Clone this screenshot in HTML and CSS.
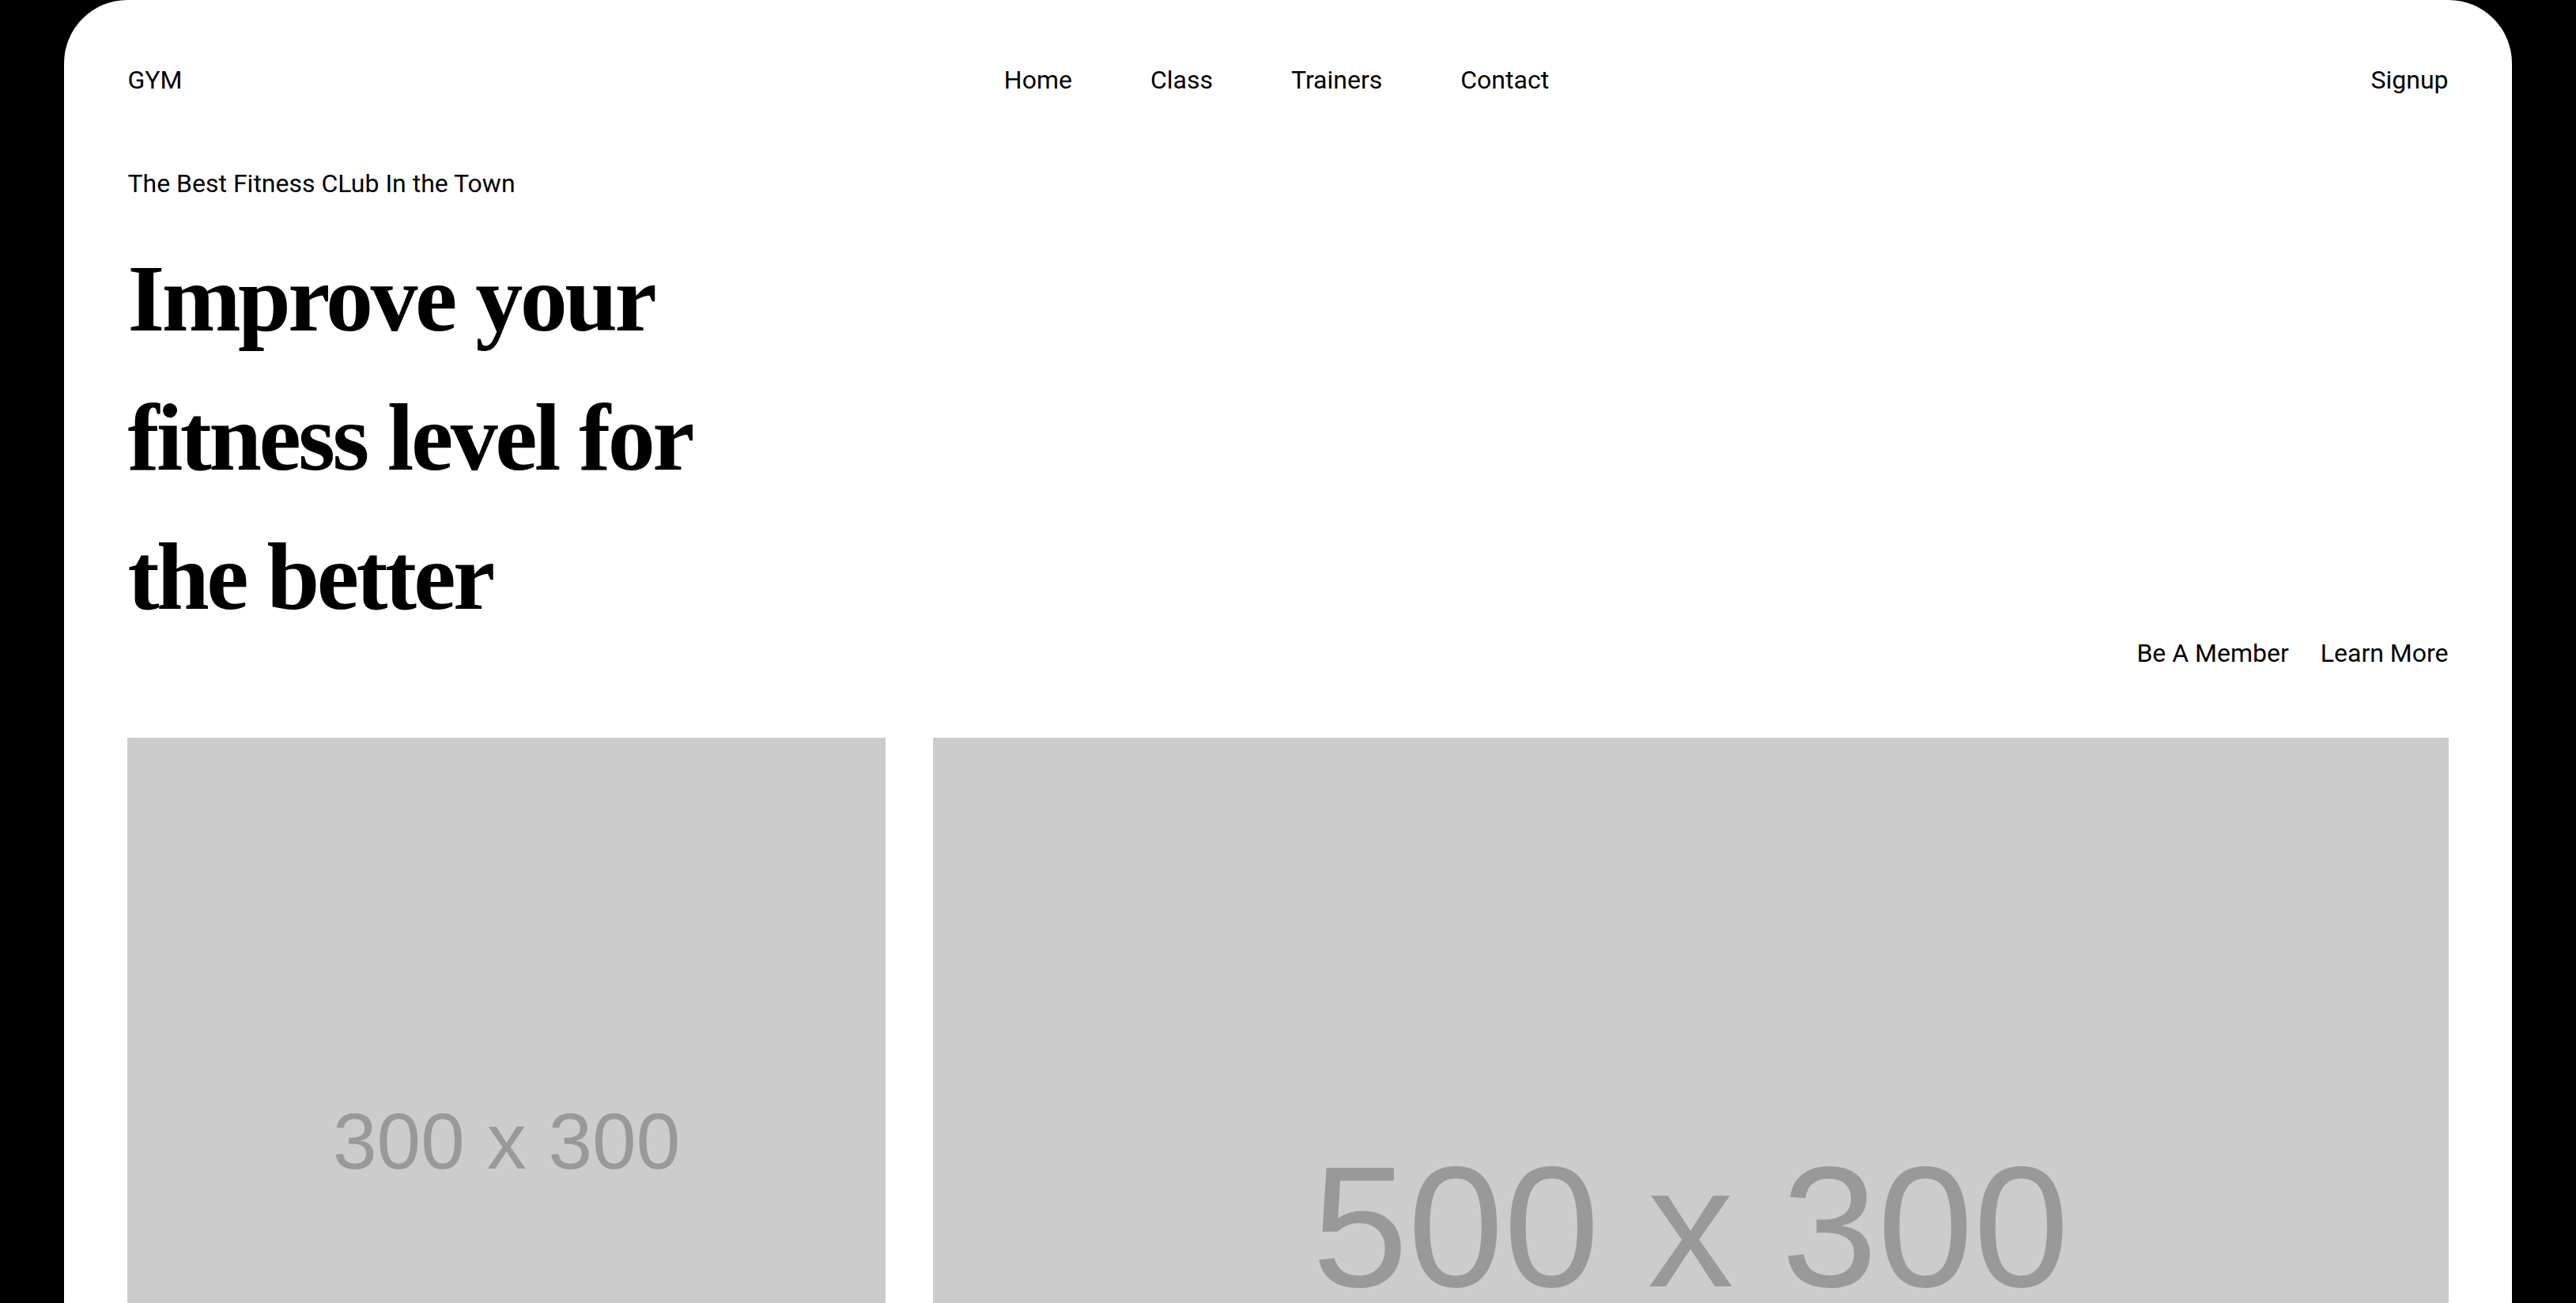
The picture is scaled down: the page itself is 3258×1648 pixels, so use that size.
FILE: index.html
```html
<!DOCTYPE html>
<html lang="en">
<head>
<meta charset="utf-8">
<title>GYM</title>
<link rel="stylesheet" href="styles.css">
</head>
<body>
  <div class="card">
    <header class="header">
      <div class="logo">GYM</div>
      <nav class="nav">
        <a href="#">Home</a>
        <a href="#">Class</a>
        <a href="#">Trainers</a>
        <a href="#">Contact</a>
      </nav>
      <a class="signup" href="#">Signup</a>
    </header>

    <p class="tagline">The Best Fitness CLub In the Town</p>

    <section class="hero">
      <h1 class="title">Improve your<br>fitness level for<br>the better</h1>
      <div class="actions">
        <a href="#">Be A Member</a>
        <a href="#">Learn More</a>
      </div>
    </section>

    <section class="gallery">
      <div class="ph ph-square"><span class="ph-text ph-text-sm">300 x 300</span></div>
      <div class="ph ph-wide"><span class="ph-text ph-text-lg">500 x 300</span></div>
    </section>
  </div>
</body>
</html>
```

FILE: styles.css
```css
* {
  box-sizing: border-box;
}

html, body {
  margin: 0;
  padding: 0;
  background: #000;
}

body {
  font-family: Roboto, "Liberation Sans", sans-serif;
  font-size: 32px;
  color: #000;
}

a {
  color: inherit;
  text-decoration: none;
}

.card {
  width: 95%;
  margin: 0 auto;
  background: #fff;
  border-radius: 80px 80px 0 0;
  padding: 82px 80px 120px;
}

.header {
  display: flex;
  justify-content: space-between;
  align-items: center;
  line-height: normal;
}

.nav {
  display: flex;
  gap: 99px;
}

.tagline {
  margin: 93px 0 0;
  line-height: normal;
}

.hero {
  display: flex;
  justify-content: space-between;
  align-items: flex-end;
}

.title {
  margin: 39px 0 27px;
  font-family: "Liberation Serif", "Times New Roman", serif;
  font-weight: 700;
  font-size: 120px;
  line-height: 176px;
  letter-spacing: -3.5px;
}

.actions {
  display: flex;
  gap: 40px;
  line-height: normal;
}

.gallery {
  margin-top: 88px;
  display: grid;
  grid-template-columns: 1fr 2fr;
  gap: 60px;
  align-items: start;
}

.ph {
  background: #cccccc;
  display: flex;
  align-items: center;
  justify-content: center;
  overflow: hidden;
}

.ph-square {
  aspect-ratio: 1 / 1;
}

.ph-wide {
  aspect-ratio: 5 / 3;
}

.ph-text {
  font-family: "Liberation Sans", Arial, sans-serif;
  color: #999999;
  line-height: normal;
  white-space: nowrap;
}

.ph-text-sm {
  font-size: 100px;
  margin-top: 62px;
}

.ph-text-lg {
  font-size: 218px;
  margin-top: 88px;
}
```
